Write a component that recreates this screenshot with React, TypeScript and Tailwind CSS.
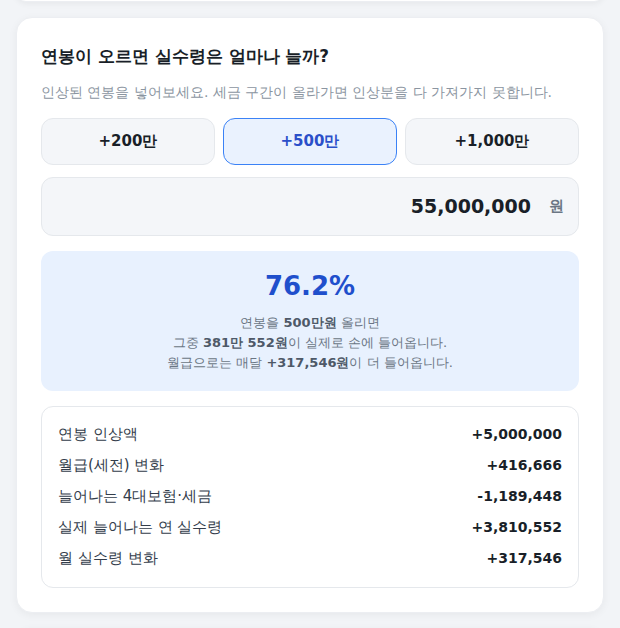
const OPTIONS = ["+200만", "+500만", "+1,000만"]

const ROWS = [
  { label: "연봉 인상액", value: "+5,000,000" },
  { label: "월급(세전) 변화", value: "+416,666" },
  { label: "늘어나는 4대보험·세금", value: "-1,189,448" },
  { label: "실제 늘어나는 연 실수령", value: "+3,810,552" },
  { label: "월 실수령 변화", value: "+317,546" },
]

export default function App() {
  const selected = 1

  return (
    <div
      className="min-h-screen overflow-hidden bg-[#f2f4f7] px-4"
      style={{ fontFamily: '"DejaVu Sans", sans-serif' }}
    >
      <div className="flex flex-col gap-[15px]">
        {/* previous card, scrolled mostly out of view */}
        <div className="-mt-[18px] h-[20px] rounded-2xl border border-[#eceef2] bg-white shadow-[0_2px_6px_rgba(0,0,0,0.05)]" />

        <div className="rounded-2xl border border-[#eceef2] bg-white p-6 shadow-[0_2px_8px_rgba(0,0,0,0.05)]">
          <h2 className="text-[16.8px] font-bold leading-7 text-[#191f28]">
            연봉이 오르면 실수령은 얼마나 늘까?
          </h2>
          <p className="mt-3 text-[14px] leading-5 text-[#8b95a1]">
            인상된 연봉을 넣어보세요. 세금 구간이 올라가면 인상분을 다 가져가지 못합니다.
          </p>

          <div className="mt-4 grid grid-cols-3 gap-2">
            {OPTIONS.map((opt, i) => (
              <button
                key={opt}
                type="button"
                className={
                  i === selected
                    ? "h-[47px] rounded-xl border border-[#3b82f6] bg-[#eaf2fe] text-[15px] font-bold text-[#2a4fc9]"
                    : "h-[47px] rounded-xl border border-[#e5e8ec] bg-[#f4f6f9] text-[15px] font-bold text-[#191f28]"
                }
              >
                {opt}
              </button>
            ))}
          </div>

          <div className="mt-3 flex h-[59px] items-center justify-end gap-[18px] rounded-xl border border-[#e5e8ec] bg-[#f4f6f9] pr-[14px]">
            <span className="text-[19px] font-bold text-[#191f28]">55,000,000</span>
            <span className="text-[15px] font-bold text-[#6b7684]">원</span>
          </div>

          <div className="mt-[15px] flex flex-col items-center rounded-xl bg-[#e8f1fe] pt-5 pb-[18px] text-center">
            <div className="text-[26px] font-bold leading-[30px] text-[#1f4fcc]">76.2%</div>
            <div className="mt-3 text-[13px] leading-5 text-[#6b7684]">
              <p>
                연봉을 <b className="text-[#4e5968]">500만원</b> 올리면
              </p>
              <p>
                그중 <b className="text-[#4e5968]">381만 552원</b>이 실제로 손에 들어옵니다.
              </p>
              <p>
                월급으로는 매달 <b className="text-[#4e5968]">+317,546원</b>이 더 들어옵니다.
              </p>
            </div>
          </div>

          <div className="mt-[15px] rounded-xl border border-[#e5e8ec] bg-white px-4 pt-3 pb-[13px]">
            {ROWS.map((row) => (
              <div key={row.label} className="flex h-[31px] items-center justify-between">
                <span className="text-[15px] text-[#333d4b]">{row.label}</span>
                <span className="text-[14px] font-bold text-[#191f28]">{row.value}</span>
              </div>
            ))}
          </div>
        </div>

        {/* next card, starting at the bottom edge */}
        <div className="h-[40px] rounded-2xl border border-[#eceef2] bg-white shadow-[0_2px_8px_rgba(0,0,0,0.05)]" />
      </div>
    </div>
  )
}
